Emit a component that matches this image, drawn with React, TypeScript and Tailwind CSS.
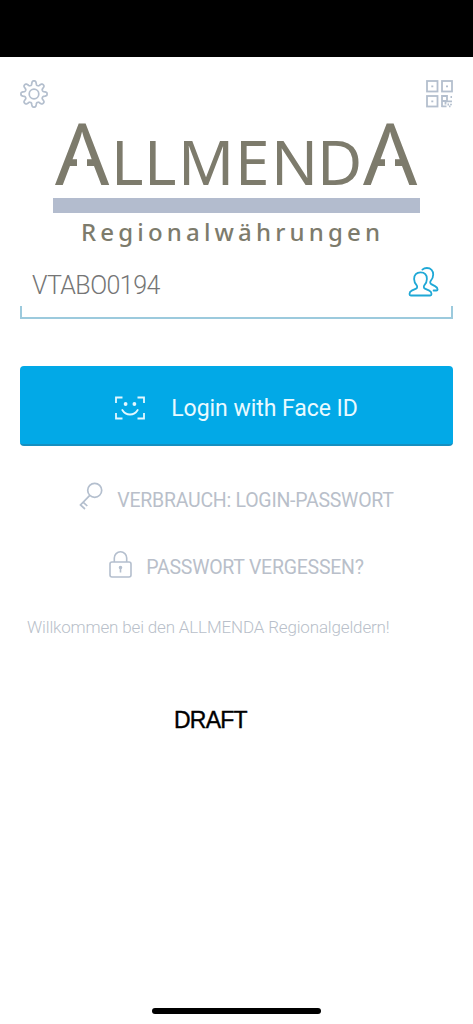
import React from 'react';

// Outline of an eight-toothed gear with rounded teeth
function gearOutline(center: number, radius: number, depth: number): string {
  const points: string[] = [];
  for (let i = 0; i < 160; i++) {
    const a = (i / 160) * Math.PI * 2;
    const r = radius + depth * Math.tanh(1.8 * Math.cos(8 * a));
    points.push(`${(center + r * Math.cos(a)).toFixed(2)} ${(center + r * Math.sin(a)).toFixed(2)}`);
  }
  return `M${points.join('L')}Z`;
}

const GearIcon: React.FC = () => (
  <svg className="w-7 h-7" viewBox="0 0 28 28" fill="none" stroke="#b4bfce" strokeWidth="1.7" strokeLinejoin="round">
    <path d={gearOutline(14, 11.1, 2.1)} />
    <circle cx="14" cy="14" r="4.8" />
  </svg>
);

const QrIcon: React.FC = () => (
  <svg className="w-7 h-7" viewBox="0 0 28 28" fill="none" stroke="#b4bfce" strokeWidth="1.8">
    <rect x="2" y="1" width="10.5" height="10.5" />
    <rect x="17" y="1" width="10" height="10.5" />
    <rect x="2" y="16" width="10.5" height="10.5" />
    <path d="M6.3 6.3h2M21 6.3h2M6.3 21.3h2" />
    <path d="M17 16h5v5h-5zM17 21v6M16.5 26.3h5M20.5 21v3.5M20.5 21.3H27M25.5 17h1.5M22.5 24.5h1.5M24 26.3h1.5M26 23.8v1.5" />
  </svg>
);

const UsersIcon: React.FC = () => (
  <svg className="w-[31px] h-[30px]" viewBox="0 0 31 30" fill="none" stroke="#1fa8d6" strokeWidth="1.8" strokeLinecap="round" strokeLinejoin="round">
    <path d="M12.5 5.4c4 0 6.4 2.6 6.4 6.6 0 3-1.3 4.9-2.6 6.3-.8.9-.6 2.9.6 3.4l4.4 1.900c1.500.700 2.200 1.700 2.200 3.400 0 1-.5 1.500-1.300 1.500H2.800c-.8 0-1.300-.5-1.300-1.500 0-1.700.7-2.700 2.200-3.400l4.400-1.900c1.200-.5 1.400-2.500.6-3.400-1.300-1.400-2.600-3.300-2.600-6.300 0-4 2.400-6.600 6.400-6.600z" />
    <path d="M14.4 2.600C15.600 1.500 17.100 1 18.900 1c4 0 6.300 2.700 6.300 6.500 0 3-1.200 4.900-2.500 6.300-.8.9-.6 2.700.5 3.300l3.800 2c1.900 1 2.600 1.800 2.600 3.300 0 .8-.5 1.100-1.200 1.100h-2.800" />
  </svg>
);

const FaceIcon: React.FC = () => (
  <svg className="w-[30px] h-6" viewBox="0 0 30 24" fill="none" stroke="#e3f8ff" strokeWidth="1.8">
    <path d="M1 7V1.500h6.500M22.500 1.500H29V7M29 17v5.500h-6.500M7.500 22.500H1V17" />
    <path d="M7.300 14c1.800 3 4.500 4.500 7.700 4.500s5.900-1.500 7.700-4.500" strokeLinecap="round" />
    <circle cx="10.600" cy="8" r="1.900" fill="#e3f8ff" stroke="none" />
    <circle cx="19.400" cy="8" r="1.900" fill="#e3f8ff" stroke="none" />
  </svg>
);

const KeyIcon: React.FC = () => (
  <svg className="w-6 h-7" viewBox="0 0 24 28" fill="none" stroke="#b4bfce" strokeWidth="1.7">
    <circle cx="15.700" cy="8.300" r="7" />
    <path d="M10.800 13.300 1.500 23l4.500 4M4.300 20.300l4 3.700" />
  </svg>
);

const LockIcon: React.FC = () => (
  <svg className="w-[23px] h-7" viewBox="0 0 23 28" fill="none" stroke="#b4bfce" strokeWidth="1.6">
    <rect x="1" y="12" width="21" height="15" rx="2" />
    <path d="M5.300 12V8a6.200 6.200 0 0 1 12.400 0v4M11.500 17v5.500" />
    <circle cx="11.500" cy="17.500" r="1" fill="#b4bfce" />
  </svg>
);

const Logo: React.FC = () => (
  <svg className="w-[367px] h-[128px] overflow-visible" viewBox="53 120 367 128" fill="#7d7b6c" fontFamily="'Noto Sans', sans-serif">
    {/* the crossbars of both big letters are open in the middle */}
    <mask id="crossbars" maskUnits="userSpaceOnUse" x="53" y="80" width="367" height="130">
      <rect x="53" y="80" width="367" height="130" fill="#fff" />
      <rect x="77" y="158" width="10" height="12" fill="#000" />
      <rect x="385" y="158" width="10" height="12" fill="#000" />
    </mask>
    <g mask="url(#crossbars)">
      <text x="55" y="184.5" fontSize="85">A</text>
      <text x="363" y="184.5" fontSize="85">A</text>
    </g>
    <text x="111 144 178 235 271 317" y="184.5" fontSize="62">LLMEND</text>
    <rect x="53" y="198" width="367" height="15" fill="#b3bcce" />
    <text x="81" y="240.7" fontSize="24" fontWeight="500" textLength="299">Regionalwährungen</text>
  </svg>
);

const App: React.FC = () => {
  return (
    <div className="w-full h-[1024px] flex flex-col bg-white font-['Roboto',sans-serif] overflow-hidden">
      <div className="h-[57px] bg-black shrink-0"></div>

      <header className="flex justify-between px-5 pt-[23px]">
        <GearIcon />
        <QrIcon />
      </header>

      <div className="flex justify-center mt-3">
        <Logo />
      </div>

      {/* User name */}
      <div className="mx-5 h-[71px] flex flex-col">
        <div className="h-[58px] flex items-start justify-between pl-3 pr-3.5 pt-[19px]">
          <span className="pt-1.5 text-[25px] font-light leading-none tracking-[-0.55px] text-[#757575]">VTABO0194</span>
          <UsersIcon />
        </div>
        <div className="h-[13px] border-x-2 border-b-2 border-[#9ccadd]"></div>
      </div>

      <button className="mx-5 mt-[47px] h-20 shrink-0 flex items-center justify-center gap-[26px] rounded bg-[#02a9e7] border-b-2 border-[#168fc0] pt-1.5 text-[23px] text-[#e9faff]">
        <FaceIcon />
        <span className="leading-none tracking-[-0.05px]">Login with Face ID</span>
      </button>

      <div className="flex items-center justify-center gap-3.5 mt-[36px] h-7 text-[#b9bfca]">
        <KeyIcon />
        <span className="pt-2.5 text-[19.5px] leading-none tracking-[-0.25px]">VERBRAUCH: LOGIN-PASSWORT</span>
      </div>

      <div className="flex items-center justify-center gap-3.5 mt-10 h-7 text-[#b9bfca]">
        <LockIcon />
        <span className="pt-2 text-[19.5px] leading-none tracking-[-0.25px]">PASSWORT VERGESSEN?</span>
      </div>

      <p className="mt-[39px] ml-[27px] text-[17px] leading-5 font-light tracking-[-0.16px] text-[#b9bfca]">
        Willkommen bei den ALLMENDA Regionalgeldern!
      </p>

      <div className="mt-[70px] ml-[174px] font-['Liberation_Sans',sans-serif] text-[23px] leading-[26px] tracking-[-0.75px] text-black [-webkit-text-stroke:0.4px_black]">DRAFT</div>

      <div className="mt-auto mb-[10px] self-center w-[169px] h-[6px] rounded-full bg-black"></div>
    </div>
  );
};

export default App;
